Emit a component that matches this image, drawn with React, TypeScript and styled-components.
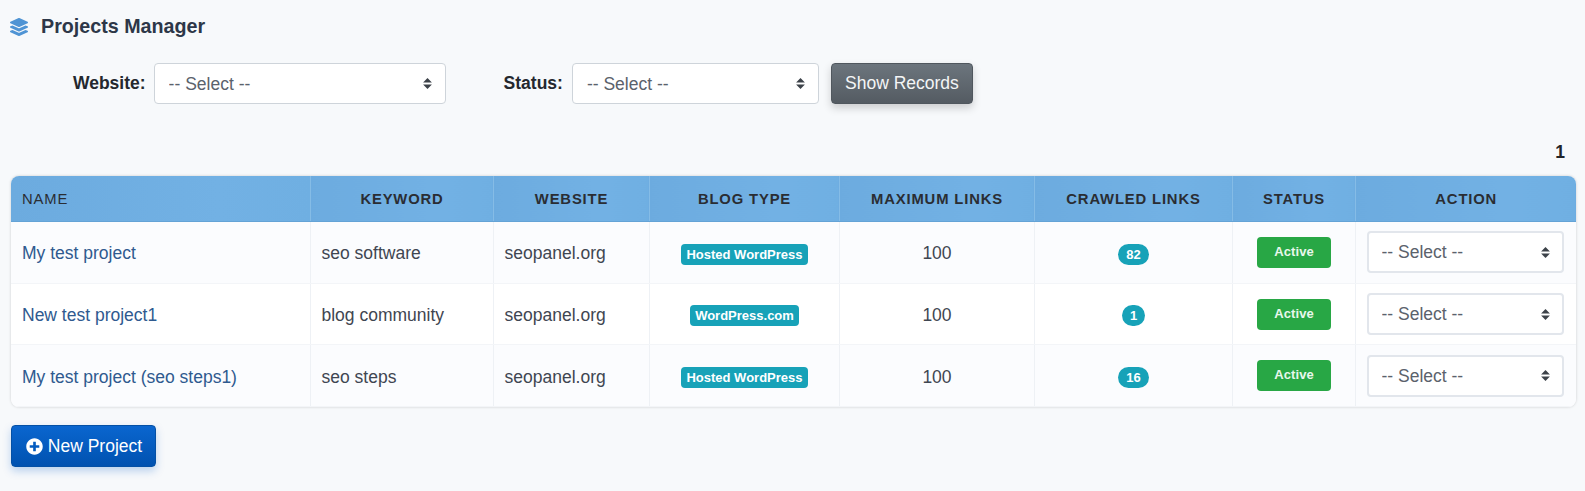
import React from 'react';
import styled, { createGlobalStyle } from 'styled-components';
import { FaLayerGroup, FaPlusCircle } from 'react-icons/fa';

const GlobalStyle = createGlobalStyle`
  body {
    margin: 0;
    background: #f7f9fb;
    font-family: "Liberation Sans", Arial, sans-serif;
    color: #212529;
  }
`;

const Page = styled.div`
  padding: 0 9px 0 11px;
  height: 491px;
  box-sizing: border-box;
  overflow: hidden;
`;

const Heading = styled.div`
  display: flex;
  align-items: center;
  gap: 13px;
  height: 53px;
  margin-left: -1px;
  font-size: 19.7px;
  font-weight: 700;
  color: #2d3748;

  svg {
    color: #4f94d4;
    width: 18px;
    height: 18px;
  }
`;

const FilterRow = styled.div`
  display: flex;
  align-items: center;
  margin-top: 10px;
  padding-left: 62px;
`;

const FilterLabel = styled.label<{ $before?: number; $after: number }>`
  font-size: 17.5px;
  font-weight: 700;
  color: #24282e;
  margin-left: ${(p) => p.$before ?? 0}px;
  margin-right: ${(p) => p.$after}px;
`;

const SelectWrap = styled.div<{ $width: number; $after?: number; $height: number }>`
  position: relative;
  width: ${(p) => p.$width}px;
  height: ${(p) => p.$height}px;
  margin-right: ${(p) => p.$after ?? 0}px;
`;

const Select = styled.select<{ $thick?: boolean }>`
  appearance: none;
  display: block;
  width: 100%;
  height: 100%;
  padding: 0 28px 0 ${(p) => (p.$thick ? 13 : 14)}px;
  font: 17.5px "Liberation Sans", Arial, sans-serif;
  color: #5b626c;
  background: #fff;
  border: ${(p) => (p.$thick ? '2px solid #e2e6ec' : '1px solid #ced4da')};
  border-radius: 4px;
  outline: none;
`;

const Caret = styled.svg`
  position: absolute;
  right: 14px;
  top: 50%;
  margin-top: -5.5px;
  width: 9px;
  height: 11px;
  pointer-events: none;
`;

const ShowButton = styled.button`
  width: 142px;
  height: 41px;
  white-space: nowrap;
  font: 17.5px "Liberation Sans", Arial, sans-serif;
  color: #f4f5f6;
  background: linear-gradient(180deg, #6c757d, #545b62);
  border: 1px solid #50575e;
  border-radius: 4px;
  box-shadow: 0 4px 8px rgba(0, 0, 0, 0.18);
`;

const Pager = styled.div`
  height: 59px;
  display: flex;
  align-items: flex-end;
  justify-content: flex-end;
  padding-right: 11px;
  font-size: 17.5px;
  font-weight: 700;
`;

const TableCard = styled.div`
  width: 1565px;
  margin-top: 13px;
  border-radius: 8px;
  overflow: hidden;
  background: #fbfcfe;
  box-shadow: 0 0 3px rgba(0, 0, 0, 0.18);
`;

const Table = styled.table`
  width: 100%;
  border-collapse: collapse;
  table-layout: fixed;
`;

const Th = styled.th<{ $left?: boolean }>`
  height: 45.5px;
  padding: 0 11px 0 ${(p) => (p.$left ? 11 : 12)}px;
  box-sizing: border-box;
  background: linear-gradient(90deg, #6cabdf, #72b1e4 70%, #6fafe2);
  border-bottom: 1px solid #64a3d6;
  border-left: 1px solid #85bce6;
  font-size: 14.8px;
  letter-spacing: 0.85px;
  color: #2a2d33;
  font-weight: ${(p) => (p.$left ? 400 : 700)};
  text-align: ${(p) => (p.$left ? 'left' : 'center')};

  &:first-child {
    border-left: none;
  }
`;

const Tr = styled.tr`
  background: #fbfcfe;

  &:nth-child(even) {
    background: #fff;
  }
`;

const Td = styled.td<{ $center?: boolean; $flush?: boolean }>`
  height: 61.7px;
  padding: ${(p) => (p.$flush ? 0 : 3)}px 11px 0 ${(p) => (p.$center ? 12 : 11)}px;
  box-sizing: border-box;
  border-left: 1px solid #eef1f5;
  border-bottom: 1px solid #f3f5f8;
  font-size: 17.5px;
  color: #3f4651;
  text-align: ${(p) => (p.$center ? 'center' : 'left')};

  &:first-child {
    border-left: none;
  }
`;

const ProjectLink = styled.a`
  color: #2f5a8f;
  text-decoration: none;
`;

const Badge = styled.span<{ $pill?: boolean }>`
  display: inline-block;
  padding: 3px ${(p) => (p.$pill ? 8 : 5.5)}px;
  font-size: 13px;
  line-height: 15px;
  font-weight: 700;
  color: #fff;
  background: #17a2b8;
  border-radius: ${(p) => (p.$pill ? 10.5 : 4)}px;
  vertical-align: middle;
`;

const ActiveTag = styled.span`
  display: inline-block;
  width: 74px;
  height: 31px;
  line-height: 30px;
  font-size: 13px;
  font-weight: 700;
  letter-spacing: 0.1px;
  color: #e8f7ec;
  background: #28a745;
  border-radius: 4px;
  vertical-align: middle;
`;

const NewButton = styled.button`
  display: flex;
  align-items: center;
  gap: 4.8px;
  margin-top: 18px;
  width: 145px;
  height: 42px;
  padding: 0 14px;
  white-space: nowrap;
  font: 17.5px "Liberation Sans", Arial, sans-serif;
  color: #fff;
  background: linear-gradient(180deg, #0a66cf, #0052b0);
  border: 1px solid #0450a5;
  border-radius: 4px;
  box-shadow: 0 4px 8px rgba(0, 90, 200, 0.25);

  svg {
    width: 17px;
    height: 17px;
    flex: none;
  }
`;

const columns = [299, 183, 156, 190, 195, 198, 123, 221];

const rows = [
  { name: 'My test project', keyword: 'seo software', blog: 'Hosted WordPress', crawled: 82 },
  { name: 'New test project1', keyword: 'blog community', blog: 'WordPress.com', crawled: 1 },
  { name: 'My test project (seo steps1)', keyword: 'seo steps', blog: 'Hosted WordPress', crawled: 16 },
];

const SelectBox: React.FC<{ width: number; height?: number; after?: number; thick?: boolean }> = ({
  width,
  height = 41,
  after,
  thick,
}) => (
  <SelectWrap $width={width} $height={height} $after={after}>
    <Select $thick={thick} defaultValue="">
      <option value="">-- Select --</option>
    </Select>
    <Caret viewBox="0 0 4 5">
      <path fill="#3c4249" d="M2 0L0 2h4zm0 5L0 3h4z" />
    </Caret>
  </SelectWrap>
);

const App: React.FC = () => {
  return (
    <Page>
      <GlobalStyle />
      <Heading>
        <FaLayerGroup />
        Projects Manager
      </Heading>
      <FilterRow>
        <FilterLabel $after={8}>Website:</FilterLabel>
        <SelectBox width={292} />
        <FilterLabel $before={58} $after={9}>
          Status:
        </FilterLabel>
        <SelectBox width={247} after={12} />
        <ShowButton>Show Records</ShowButton>
      </FilterRow>
      <Pager>1</Pager>
      <TableCard>
        <Table>
          <colgroup>
            {columns.map((w, i) => (
              <col key={i} width={w} />
            ))}
          </colgroup>
          <thead>
            <tr>
              <Th $left>NAME</Th>
              <Th>KEYWORD</Th>
              <Th>WEBSITE</Th>
              <Th>BLOG TYPE</Th>
              <Th>MAXIMUM LINKS</Th>
              <Th>CRAWLED LINKS</Th>
              <Th>STATUS</Th>
              <Th>ACTION</Th>
            </tr>
          </thead>
          <tbody>
            {rows.map((row) => (
              <Tr key={row.name}>
                <Td>
                  <ProjectLink href="#">{row.name}</ProjectLink>
                </Td>
                <Td>{row.keyword}</Td>
                <Td>seopanel.org</Td>
                <Td $center>
                  <Badge>{row.blog}</Badge>
                </Td>
                <Td $center>100</Td>
                <Td $center>
                  <Badge $pill>{row.crawled}</Badge>
                </Td>
                <Td $center $flush>
                  <ActiveTag>Active</ActiveTag>
                </Td>
                <Td $flush>
                  <SelectBox width={197} height={42} thick />
                </Td>
              </Tr>
            ))}
          </tbody>
        </Table>
      </TableCard>
      <NewButton>
        <FaPlusCircle />
        New Project
      </NewButton>
    </Page>
  );
};

export default App;
